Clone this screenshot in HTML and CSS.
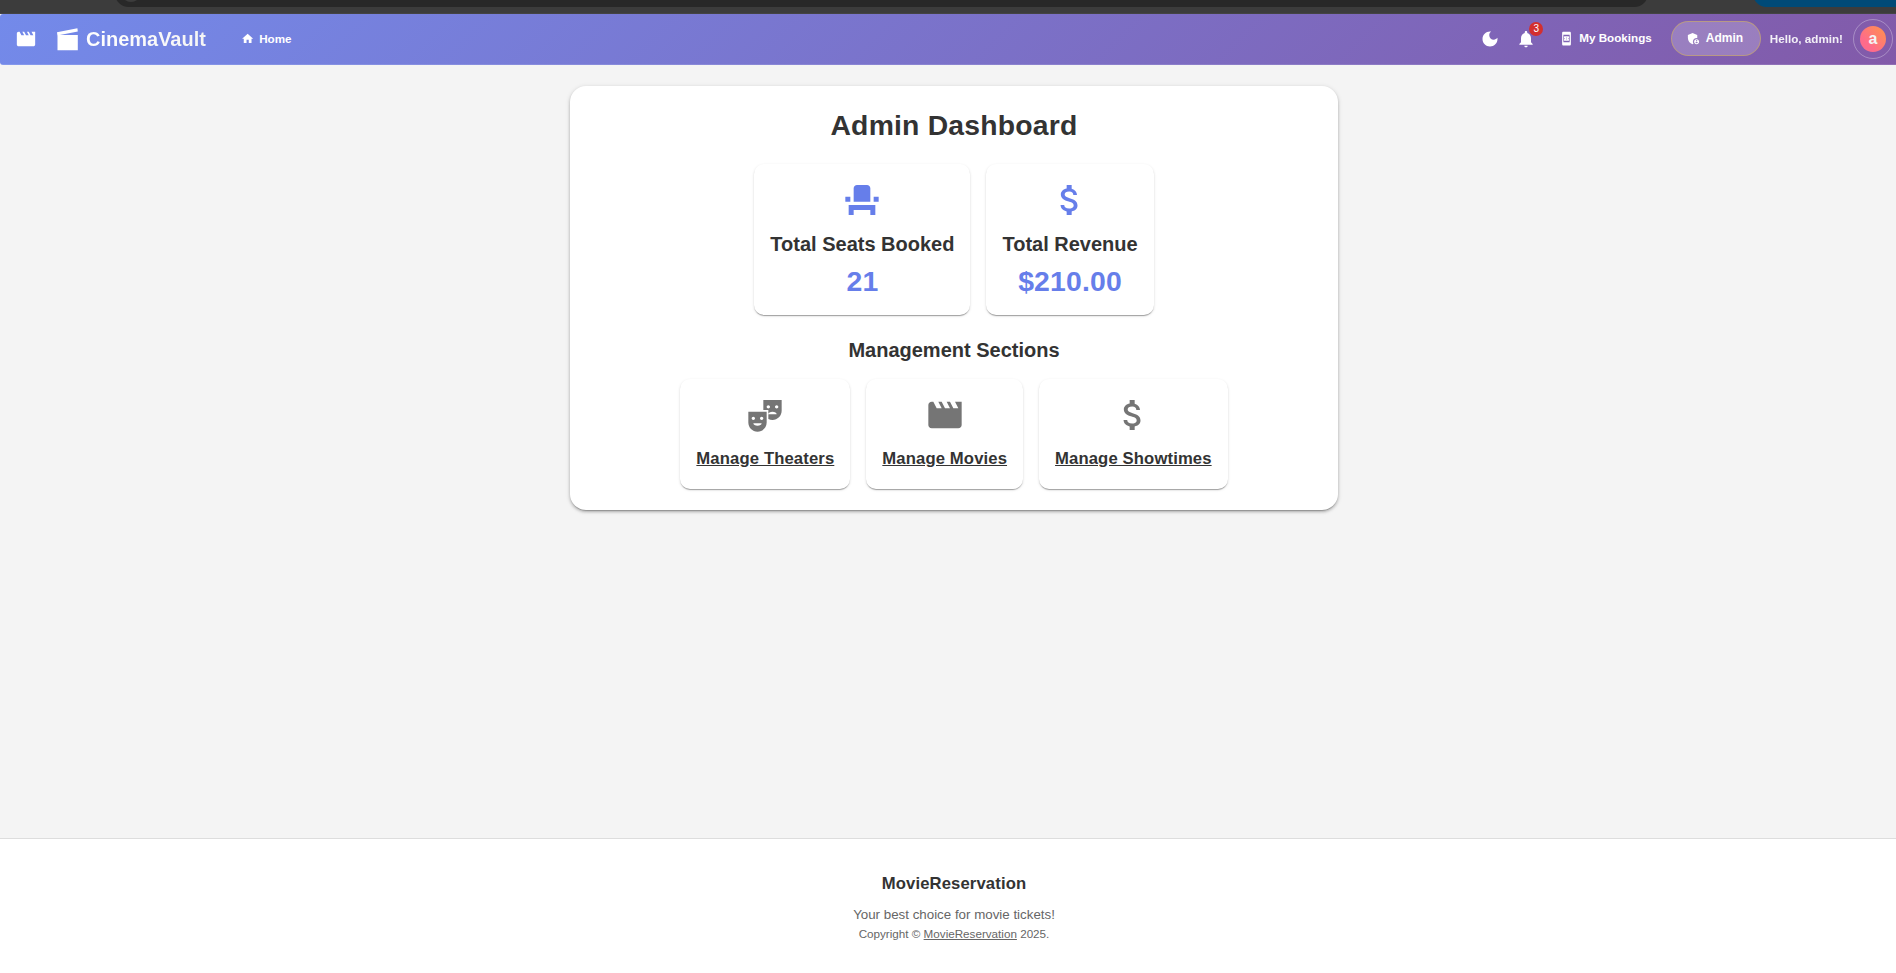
FILE: index.html
```html
<!DOCTYPE html>
<html lang="en">
<head>
<meta charset="utf-8">
<title>CinemaVault - Admin Dashboard</title>
<link rel="stylesheet" href="styles.css">
</head>
<body>
<div class="chrome"><div class="address"><i class="address-icon"></i></div><div class="chrome-button"></div></div>
<header class="navbar">
  <svg class="menu-icon" viewBox="0 0 24 24"><path d="m18 4 2 4h-3l-2-4h-2l2 4h-3l-2-4H8l2 4H7L5 4H4c-1.1 0-1.99.9-1.99 2L2 18c0 1.1.9 2 2 2h16c1.1 0 2-.9 2-2V4z"/></svg>
  <a class="brand"><svg class="brand-icon" viewBox="0 0 21 23"><path d="M0 4.2 20.4.2l.4 3.2L.4 7.6zM.5 7.1h20.3v15.2H.5z"/></svg><span>CinemaVault</span></a>
  <a class="home"><svg viewBox="0 0 24 24"><path d="M10 20v-6h4v6h5v-8h3L12 3 2 12h3v8z"/></svg><span>Home</span></a>
  <div class="actions">
    <svg class="tool" viewBox="0 0 24 24"><path d="M12 3c-4.97 0-9 4.03-9 9s4.03 9 9 9 9-4.03 9-9c0-.46-.04-.92-.1-1.36-.98 1.37-2.58 2.26-4.4 2.26-2.98 0-5.4-2.42-5.4-5.4 0-1.81.89-3.42 2.26-4.4-.44-.06-.9-.1-1.36-.1"/></svg>
    <div class="bell"><svg class="tool" viewBox="0 0 24 24"><path d="M12 22c1.1 0 2-.9 2-2h-4c0 1.1.89 2 2 2m6-6v-5c0-3.07-1.64-5.64-4.5-6.32V4c0-.83-.67-1.5-1.5-1.5s-1.500.67-1.500 1.500v.68C7.630 5.360 6 7.920 6 11v5l-2 2v1h16v-1z"/></svg><span class="badge">3</span></div>
    <a class="bookings"><svg viewBox="0 0 24 24"><path fill-rule="evenodd" d="M7 1h10c1.100 0 2 .9 2 2v18c0 1.100-.9 2-2 2H7c-1.100 0-2-.9-2-2V3c0-1.100.9-2 2-2zm0 5v12h10V6zM16 11V9.140c0-.47-.38-.86-.86-.86H8.860c-.48 0-.86.390-.86.860V11c.550 0 1 .450 1 1s-.45 1-1 1v1.860c0 .470.380.860.860.860h6.290c.470 0 .860-.39.860-.86V13c-.55 0-1-.45-1-1s.440-1 .99-1zM12.500 14.500h-1v-1h1zm0-2h-1v-1h1zm0-2h-1v-1h1z"/></svg><span>My Bookings</span></a>
    <a class="admin"><svg viewBox="0 0 24 24"><path d="M17 11c.34 0 .67.040 1 .09V6.270L10.500 3 3 6.270v4.910c0 4.540 3.200 8.790 7.500 9.820.55-.13 1.080-.32 1.600-.55-.69-.98-1.100-2.170-1.100-3.450 0-3.310 2.690-6 6-6"/><path fill-rule="evenodd" d="M17 13c-2.210 0-4 1.790-4 4s1.790 4 4 4 4-1.790 4-4-1.790-4-4-4m0 1.380c.62 0 1.120.51 1.120 1.120s-.51 1.120-1.120 1.120-1.120-.51-1.120-1.120.5-1.120 1.120-1.120m0 5.370c-.93 0-1.740-.46-2.240-1.170.050-.72 1.510-1.080 2.240-1.080s2.190.36 2.240 1.080c-.5.710-1.310 1.170-2.240 1.170"/></svg><span>Admin</span></a>
    <span class="hello">Hello, admin!</span>
    <div class="ring"><div class="avatar">a</div></div>
  </div>
</header>
<main class="content">
  <section class="panel">
    <h1>Admin Dashboard</h1>
    <div class="cards">
      <div class="card stat">
        <svg class="icon" viewBox="0 0 24 24"><path d="M4 18v3h3v-3h10v3h3v-6H4zm15-8h3v3h-3zM2 10h3v3H2zm15 3H7V5c0-1.100.9-2 2-2h6c1.100 0 2 .9 2 2z"/></svg>
        <h2>Total Seats Booked</h2><p class="value">21</p>
      </div>
      <div class="card stat">
        <svg class="icon" viewBox="0 0 24 24"><path d="M11.800 10.900c-2.270-.59-3-1.200-3-2.150 0-1.090 1.010-1.850 2.700-1.850 1.780 0 2.440.85 2.500 2.100h2.210c-.07-1.720-1.120-3.300-3.210-3.810V3h-3v2.160c-1.940.42-3.500 1.680-3.500 3.610 0 2.310 1.910 3.460 4.700 4.130 2.500.6 3 1.480 3 2.410 0 .69-.49 1.790-2.700 1.790-2.060 0-2.870-.92-2.980-2.100h-2.200c.12 2.190 1.760 3.420 3.680 3.830V21h3v-2.150c1.950-.37 3.500-1.500 3.500-3.550 0-2.840-2.430-3.810-4.700-4.400"/></svg>
        <h2>Total Revenue</h2><p class="value">$210.00</p>
      </div>
    </div>
    <h2 class="section-title">Management Sections</h2>
    <div class="cards">
      <a class="card link">
        <svg class="icon" viewBox="0 0 24 24"><path fill-rule="evenodd" d="M2 16.500C2 19.540 4.460 22 7.500 22s5.500-2.460 5.500-5.500V10H2zm5.500 2C6.120 18.500 5 17.830 5 17h5c0 .830-1.120 1.500-2.500 1.500M10 13c.55 0 1 .45 1 1s-.45 1-1 1-1-.45-1-1 .45-1 1-1m-5 0c.55 0 1 .45 1 1s-.45 1-1 1-1-.45-1-1 .45-1 1-1M11 3v6h3v2.500c0-.83 1.120-1.500 2.500-1.500s2.500.67 2.500 1.500h-5v2.890c.75.380 1.600.610 2.500.610 3.040 0 5.500-2.460 5.500-5.500V3zm3 5.080c-.55 0-1-.45-1-1s.45-1 1-1 1 .45 1 1c0 .56-.45 1-1 1m5 0c-.55 0-1-.45-1-1s.45-1 1-1 1 .45 1 1c0 .56-.45 1-1 1"/></svg>
        <h3>Manage Theaters</h3>
      </a>
      <a class="card link">
        <svg class="icon" viewBox="0 0 24 24"><path d="m18 4 2 4h-3l-2-4h-2l2 4h-3l-2-4H8l2 4H7L5 4H4c-1.100 0-1.990.9-1.990 2L2 18c0 1.100.9 2 2 2h16c1.100 0 2-.9 2-2V4z"/></svg>
        <h3>Manage Movies</h3>
      </a>
      <a class="card link">
        <svg class="icon" viewBox="0 0 24 24"><path d="M11.800 10.900c-2.270-.59-3-1.200-3-2.150 0-1.090 1.010-1.850 2.700-1.850 1.780 0 2.440.85 2.500 2.100h2.210c-.07-1.720-1.120-3.300-3.210-3.810V3h-3v2.160c-1.940.42-3.500 1.680-3.500 3.610 0 2.310 1.910 3.460 4.700 4.130 2.500.6 3 1.480 3 2.410 0 .69-.49 1.790-2.700 1.790-2.060 0-2.870-.92-2.980-2.100h-2.200c.12 2.190 1.760 3.420 3.680 3.830V21h3v-2.150c1.950-.37 3.500-1.500 3.500-3.550 0-2.840-2.430-3.810-4.700-4.400"/></svg>
        <h3>Manage Showtimes</h3>
      </a>
    </div>
  </section>
</main>
<footer class="footer">
  <h3>MovieReservation</h3>
  <p class="tagline">Your best choice for movie tickets!</p>
  <p class="copyright">Copyright © <a>MovieReservation</a> 2025.</p>
</footer>
</body>
</html>
```
FILE: styles.css
```css
* { box-sizing: border-box; margin: 0; }
body { height: 973px; overflow: hidden; display: flex; flex-direction: column; background: #f4f4f4; color: #333; font-family: "Liberation Sans", Arial, sans-serif; }
svg { display: block; fill: currentColor; flex: none; }
.chrome { flex: none; height: 14px; background: #3c3c3c; display: flex; overflow: hidden; border-bottom: 1px solid #444; }
.address { flex: none; width: 1533px; margin-left: 115px; height: 27px; margin-top: -20px; border-radius: 14px; background: #282828; }
.address-icon { display: block; width: 20px; height: 20px; margin: 2px 0 0 6px; border-radius: 50%; background: #3c3c3c; }
.chrome-button { width: 200px; margin-left: 105px; flex: none; height: 27px; margin-top: -20px; border-radius: 14px; background: #004a77; }

.navbar { flex: none; height: 51px; display: flex; align-items: center; padding: 0 3px 0 14px; color: #fff; background: linear-gradient(135deg, #738aea 0%, #825aa9 100%); border-radius: 3px 0 0 3px; border-bottom: 1px solid rgba(255,255,255,.12); }
.menu-icon { width: 22px; height: 22px; margin-left: 1px; }
.brand { display: flex; align-items: center; gap: 8px; margin-left: 20px; font-size: 20px; font-weight: 700; }
.brand-icon { width: 21px; height: 23px; }
.brand span { letter-spacing: -.02px; background: linear-gradient(45deg, #fff, #f4f4f4); -webkit-background-clip: text; color: transparent; }
.home, .bookings, .hello { font-size: 11.67px; font-weight: 700; }
.home { display: flex; align-items: center; gap: 5px; margin-left: 35px; }
.home svg { width: 13.3px; height: 13.3px; }
.actions { margin-left: auto; display: flex; align-items: center; }
.tool { width: 20px; height: 20px; }
.bell { position: relative; margin-left: 16px; }
.badge { position: absolute; left: 13px; top: -7px; width: 14px; height: 14px; border-radius: 50%; background: #d32f2f; font-size: 10px; line-height: 13px; text-align: center; }
.bookings { display: flex; align-items: center; gap: 5px; margin: 0 0 2px 23px; }
.bookings svg { width: 15px; height: 15px; }
.bookings span { margin-bottom: 1px; }
.admin { display: flex; align-items: center; gap: 5px; width: 90px; height: 35px; padding-left: 14px; margin: 0 0 2px 19px; border: 1px solid rgba(255,215,0,.3); border-radius: 18px; background: rgba(255,255,255,.2); font-size: 12px; font-weight: 700; }
.admin svg { width: 15px; height: 15px; }
.admin span { margin-bottom: 1px; }
.hello { margin: 0 0 1px 9px; opacity: .9; }
.ring { width: 40px; height: 40px; margin-left: 10px; border: 1px solid rgba(255,255,255,.3); border-radius: 50%; display: flex; align-items: center; justify-content: center; }
.avatar { width: 26px; height: 26px; border-radius: 50%; background: linear-gradient(45deg, #fe6b8b 30%, #ff8e53 90%); color: #f4f4f4; display: flex; align-items: center; justify-content: center; font-size: 16px; font-weight: 700; }

.content { flex: 1; display: flex; justify-content: center; align-items: flex-start; padding: 21px 0 0 12px; }
.panel { width: 768px; height: 424px; padding: 22px 0 0; border-radius: 16px; background: #fff; text-align: center; box-shadow: 0 2px 1px -1px rgba(0,0,0,.2), 0 2px 3px rgba(0,0,0,.2), 0 1px 5px rgba(0,0,0,.14); }
h1, .value { font-size: 28.33px; line-height: 35px; letter-spacing: .00735em; font-weight: 700; }
h2 { font-size: 20px; line-height: 26.7px; font-weight: 700; }
h3 { font-size: 16.67px; line-height: 26.7px; letter-spacing: .0075em; font-weight: 700; }
.cards { display: flex; justify-content: center; gap: 16px; }
.card { padding: 16px; border-radius: 10px; display: flex; flex-direction: column; align-items: center; box-shadow: 0 2px 1px -1px rgba(0,0,0,.2), 0 1px 1px rgba(0,0,0,.14), 0 1px 3px rgba(0,0,0,.12); }
h1 + .cards { margin-top: 21px; }
.icon { width: 40px; height: 40px; margin-bottom: 10.67px; }
.stat { height: 151px; }
.stat .icon, .value { color: #667eea; }
.stat h2 { margin-bottom: 7px; }
.section-title { margin-top: 21.5px; margin-bottom: 16px; }
.link { height: 110px; }
.link .icon { color: #757575; }
.link h3 { text-decoration: underline; }
.footer { flex: none; height: 135px; border-top: 1px solid #ddd; background: #fff; text-align: center; padding: 32px 0 0 12px; }
.tagline { margin-top: 7px; font-size: 13.33px; line-height: 20px; color: #666; }
.copyright { font-size: 11.67px; line-height: 17px; color: #666; }
.copyright a { text-decoration: underline; }
```
